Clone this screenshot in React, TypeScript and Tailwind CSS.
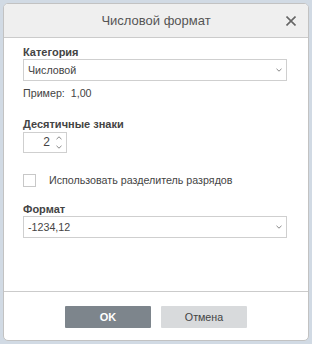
import { useState } from 'react'

function Chevron({ up = false }: { up?: boolean }) {
  return (
    <svg width="6" height="4" viewBox="0 0 6 4" className={up ? 'rotate-180' : ''}>
      <path d="M0.5 0.8 L3 3.2 L5.5 0.8" fill="none" stroke="#888" strokeWidth="1" />
    </svg>
  )
}

function Select({ value }: { value: string }) {
  return (
    <div className="flex h-[22px] w-[264px] items-center justify-between border border-[#cfcfcf] bg-white pl-[4px] pr-[4px]">
      <span className="text-[10.7px]">{value}</span>
      <Chevron />
    </div>
  )
}

export default function App() {
  const [checked, setChecked] = useState(false)

  return (
    <div
      className="h-[344px] w-[312px] bg-[#d1dae4] p-[3px] text-[11px] leading-[13px] text-[#444]"
      style={{ fontFamily: '"Liberation Sans", Arial, sans-serif' }}
    >
      <div className="flex h-[338px] w-[306px] flex-col overflow-hidden rounded-[5px] border border-[#c2c2c2] bg-white">
        <div className="relative flex h-[34px] shrink-0 items-center justify-center border-b border-[#cbcbcb] bg-[#efefef]">
          <span className="text-[13px] text-[#555]">Числовой формат</span>
          <svg width="10" height="10" viewBox="0 0 10 10" className="absolute right-[12px] top-[12px]">
            <path d="M0.5 0.5 L9.5 9.5 M9.5 0.5 L0.5 9.5" stroke="#666" strokeWidth="1.6" />
          </svg>
        </div>

        <div className="flex flex-1 flex-col px-[19px] pt-[8px]">
          <div className="font-bold">Категория</div>
          <Select value="Числовой" />
          <div className="mt-[6px] text-[10.7px]">Пример:&nbsp; 1,00</div>

          <div className="mt-[18px] mb-[1px] font-bold">Десятичные знаки</div>
          <div className="flex h-[21px] w-[44px] items-center justify-end border border-[#cfcfcf] bg-white pr-[4px]">
            <span className="mr-[6px] text-[12px]">2</span>
            <div className="flex flex-col gap-[5px]">
              <Chevron up />
              <Chevron />
            </div>
          </div>

          <label className="mt-[21px] flex cursor-pointer items-center">
            <span
              onClick={() => setChecked(!checked)}
              className="h-[13px] w-[13px] border border-[#c8c8c8] bg-white"
            />
            <span className="ml-[13px] text-[10.7px]">Использовать разделитель разрядов</span>
          </label>

          <div className="mt-[16px] font-bold">Формат</div>
          <Select value="-1234,12" />
        </div>

        <div className="flex h-[49px] shrink-0 items-start justify-center gap-[10px] border-t border-[#cbcbcb] pt-[14px]">
          <button className="h-[22px] w-[86px] rounded-[1px] bg-[#7d858c] font-bold text-white">OK</button>
          <button className="h-[22px] w-[86px] rounded-[1px] bg-[#d8dadc] text-[10.7px] text-[#444]">Отмена</button>
        </div>
      </div>
    </div>
  )
}
